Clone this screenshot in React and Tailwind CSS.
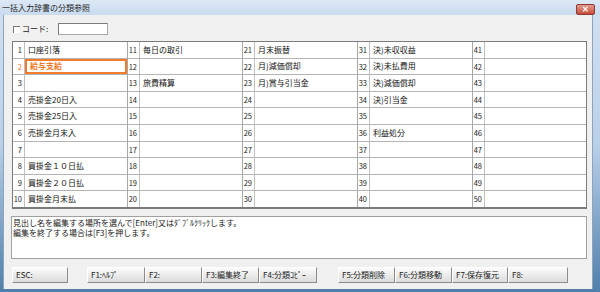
import React from "react";

const cols = [
  [[1,"口座引落"],[2,"給与支給"],[3,""],[4,"売掛金20日入"],[5,"売掛金25日入"],[6,"売掛金月末入"],[7,""],[8,"買掛金１０日払"],[9,"買掛金２０日払"],[10,"買掛金月末払"]],
  [[11,"毎日の取引"],[12,""],[13,"旅費精算"],[14,""],[15,""],[16,""],[17,""],[18,""],[19,""],[20,""]],
  [[21,"月末振替"],[22,"月)減価償却"],[23,"月)賞与引当金"],[24,""],[25,""],[26,""],[27,""],[28,""],[29,""],[30,""]],
  [[31,"決)未収収益"],[32,"決)未払費用"],[33,"決)減価償却"],[34,"決)引当金"],[35,""],[36,"利益処分"],[37,""],[38,""],[39,""],[40,""]],
  [[41,""],[42,""],[43,""],[44,""],[45,""],[46,""],[47,""],[48,""],[49,""],[50,""]],
];

function Btn({ label, w, className = "" }) {
  return (
    <div
      className={
        "h-[16px] flex items-center pl-[3px] text-[8px] leading-none text-[#222] bg-gradient-to-b from-[#fbfbfb] to-[#dcdcdc] border-t border-l border-t-[#ffffff] border-l-[#ffffff] border-r border-b border-r-[#8c8c8c] border-b-[#8c8c8c] " +
        className
      }
      style={{ width: w }}
    >
      {label}
    </div>
  );
}

export default function App() {
  return (
    <div
      className="w-[600px] h-[292px] flex flex-col bg-gradient-to-b from-[#d3e2f3] via-[#b9cfe8] to-[#4f7fab] overflow-hidden"
      style={{ fontFamily: '"Noto Sans CJK JP", "Noto Sans", sans-serif' }}
    >
      {/* title bar */}
      <div className="h-[15px] flex items-center justify-between pl-[2px] pr-[5px] bg-gradient-to-b from-[#dde8f5] to-[#c9dbef]">
        <span className="text-[8px] leading-none text-[#1e1e1e]">一括入力辞書の分類参照</span>
        <div className="w-[19px] h-[11px] mt-[3px] rounded-[2px] bg-gradient-to-b from-[#e49a8e] to-[#c44a3a] border border-[#8e3a30] flex items-center justify-center text-white text-[8px] font-bold leading-none">
          ✕
        </div>
      </div>

      {/* client */}
      <div className="flex-1 flex ml-[3px] mr-[7px] mb-[3px] bg-[#f0f0f0] border-l border-r border-[#8da4bd]">
        <div className="flex-1 flex flex-col pl-[8px]">
          {/* code row */}
          <div className="flex items-center h-[12px] mt-[8px]">
            <div className="w-[7px] h-[7px] ml-[1px] bg-white border-t border-l border-[#7a7a7a]" />
            <span className="ml-[2px] text-[8px] leading-none text-[#222]">コード:</span>
            <div className="ml-[10px] w-[50px] h-[12px] bg-white border border-[#a9a9a9] border-t-[#7a7a7a] border-l-[#7a7a7a]" />
          </div>

          {/* grid */}
          <div className="mt-[6px] w-[575px] h-[168px] flex bg-white border-t border-l border-r border-[#7c7c7c] border-b-2 border-b-[#7a7a7a]">
            {cols.map((col, ci) => (
              <div
                key={ci}
                className={"w-[115px] flex flex-col " + (ci < 4 ? "border-r border-[#a8a8a8]" : "flex-1")}
              >
                {col.map(([n, name], ri) => {
                  const sel = n === 2;
                  return (
                    <div
                      key={n}
                      className={"flex-1 flex " + (ri < 9 ? "border-b border-[#b4b4b4]" : "")}
                    >
                      <div
                        className={
                          "w-[12px] shrink-0 flex items-center justify-end pr-[2px] text-[7.5px] leading-none border-r border-[#c0c0c0] " +
                          (sel ? "text-[#f07a2a]" : "text-[#222]")
                        }
                      >
                        {n}
                      </div>
                      <div
                        className={
                          "flex-1 flex items-center pl-[3px] text-[8px] leading-none whitespace-nowrap " +
                          (sel
                            ? "border-2 border-[#f27b2c] text-[#f07a2a] font-bold pl-[1px]"
                            : "text-[#111]")
                        }
                      >
                        {name}
                      </div>
                    </div>
                  );
                })}
              </div>
            ))}
          </div>

          {/* message */}
          <div className="mt-[7px] w-[576px] h-[43px] -ml-[1px] bg-white border border-[#a0a0a0] pl-[1px] pt-[1px] text-[8px] leading-[10px] text-[#1a1a1a]">
            <div>見出し名を編集する場所を選んで[Enter]又はﾀﾞﾌﾞﾙｸﾘｯｸします。</div>
            <div>編集を終了する場合は[F3]を押します。</div>
          </div>

          {/* buttons */}
          <div className="mt-[8px] flex">
            <Btn label="ESC:" w={56} />
            <Btn label="F1:ﾍﾙﾌﾟ" w={58} className="ml-[19px]" />
            <Btn label="F2:" w={57} />
            <Btn label="F3:編集終了" w={57} />
            <Btn label="F4:分類ｺﾋﾟｰ" w={58} />
            <Btn label="F5:分類削除" w={57} className="ml-[21px]" />
            <Btn label="F6:分類移動" w={57} />
            <Btn label="F7:保存復元" w={56} />
            <Btn label="F8:" w={60} />
          </div>
        </div>
      </div>
    </div>
  );
}
